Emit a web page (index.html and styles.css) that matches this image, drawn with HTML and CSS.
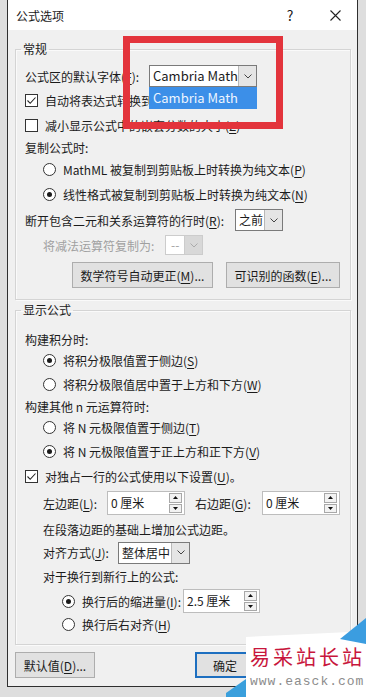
FILE: index.html
```html
<!DOCTYPE html>
<html lang="zh-CN">
<head>
    <meta charset="UTF-8">
    <meta name="viewport" content="width=device-width, initial-scale=1.0">
    <title>公式选项</title>
    <link rel="stylesheet" href="styles.css">
</head>
<body>
    <div class="dialog">
        <div class="titlebar">
            <span class="title">公式选项</span>
            <span class="help">?</span>
            <span class="close">
                <svg width="11" height="11" viewBox="0 0 11 11"><path d="M0.5 0.5L10.5 10.5M10.5 0.5L0.5 10.5" stroke="#222" stroke-width="1.1" fill="none"/></svg>
            </span>
        </div>

        <fieldset class="group group-general">
            <legend>常规</legend>
            <div class="row h22">
                <span class="lbl lbl-font">公式区的默认字体(<u>F</u>):</span>
                <div class="combo combo-font">
                    <span class="combo-text">Cambria Math</span>
                    <span class="combo-arrow"><svg width="8" height="5" viewBox="0 0 8 5"><path d="M0.5 0.5L4 4L7.5 0.5" stroke="#444" fill="none"/></svg></span>
                    <div class="dropdown">Cambria Math</div>
                </div>
            </div>
            <div class="row h26">
                <span class="check"><svg width="11" height="11" viewBox="0 0 11 11"><path d="M1.5 5.5L4.2 8.3L9.5 2.5" stroke="#222" stroke-width="1.1" fill="none"/></svg></span>
                <span>自动将表达式转换到专业格式(<u>A</u>)</span>
            </div>
            <div class="row h24">
                <span class="check"></span>
                <span>减小显示公式中的嵌套分数的大小(<u>Z</u>)</span>
            </div>
            <div class="row h20">复制公式时:</div>
            <div class="row h24 indent">
                <span class="radio"></span>
                <span>MathML 被复制到剪贴板上时转换为纯文本(<u>P</u>)</span>
            </div>
            <div class="row h26 indent">
                <span class="radio on"></span>
                <span>线性格式被复制到剪贴板上时转换为纯文本(<u>N</u>)</span>
            </div>
            <div class="row h26">
                <span class="lbl lbl-break">断开包含二元和关系运算符的行时(<u>R</u>):</span>
                <div class="combo combo-break">
                    <span class="combo-text">之前</span>
                    <span class="combo-arrow"><svg width="8" height="5" viewBox="0 0 8 5"><path d="M0.5 0.5L4 4L7.5 0.5" stroke="#444" fill="none"/></svg></span>
                </div>
            </div>
            <div class="row h24 indent disabled">
                <span class="lbl lbl-minus">将减法运算符复制为:</span>
                <div class="combo combo-minus">
                    <span class="combo-text">--</span>
                    <span class="combo-arrow"><svg width="8" height="5" viewBox="0 0 8 5"><path d="M0.5 0.5L4 4L7.5 0.5" stroke="#aaa" fill="none"/></svg></span>
                </div>
            </div>
            <div class="row button-row">
                <button class="btn btn-autocorrect">数学符号自动更正(<u>M</u>)...</button>
                <button class="btn btn-functions">可识别的函数(<u>E</u>)...</button>
            </div>
        </fieldset>

        <fieldset class="group group-display">
            <legend>显示公式</legend>
            <div class="row h20">构建积分时:</div>
            <div class="row h22 indent">
                <span class="radio on"></span>
                <span>将积分极限值置于侧边(<u>S</u>)</span>
            </div>
            <div class="row h26 indent">
                <span class="radio"></span>
                <span>将积分极限值居中置于上方和下方(<u>W</u>)</span>
            </div>
            <div class="row h18">构建其他 n 元运算符时:</div>
            <div class="row h24 indent">
                <span class="radio"></span>
                <span>将 N 元极限值置于侧边(<u>T</u>)</span>
            </div>
            <div class="row h24 indent">
                <span class="radio on"></span>
                <span>将 N 元极限值置于正上方和正下方(<u>V</u>)</span>
            </div>
            <div class="row h26">
                <span class="check"><svg width="11" height="11" viewBox="0 0 11 11"><path d="M1.5 5.5L4.2 8.3L9.5 2.5" stroke="#222" stroke-width="1.1" fill="none"/></svg></span>
                <span>对独占一行的公式使用以下设置(<u>U</u>)。</span>
            </div>
            <div class="row h28 indent">
                <span class="lbl lbl-left">左边距(<u>L</u>):</span>
                <div class="spin">
                    <span class="spin-text">0 厘米</span>
                    <span class="spin-btns">
                        <span class="spin-btn"><svg width="5" height="3" viewBox="0 0 5 3"><path d="M0 3L2.5 0L5 3Z" fill="#111"/></svg></span>
                        <span class="spin-btn"><svg width="5" height="3" viewBox="0 0 5 3"><path d="M0 0L2.5 3L5 0Z" fill="#111"/></svg></span>
                    </span>
                </div>
                <span class="lbl lbl-right">右边距(<u>G</u>):</span>
                <div class="spin">
                    <span class="spin-text">0 厘米</span>
                    <span class="spin-btns">
                        <span class="spin-btn"><svg width="5" height="3" viewBox="0 0 5 3"><path d="M0 3L2.5 0L5 3Z" fill="#111"/></svg></span>
                        <span class="spin-btn"><svg width="5" height="3" viewBox="0 0 5 3"><path d="M0 0L2.5 3L5 0Z" fill="#111"/></svg></span>
                    </span>
                </div>
            </div>
            <div class="row h24 indent">在段落边距的基础上增加公式边距。</div>
            <div class="row h23 indent">
                <span class="lbl lbl-align">对齐方式(<u>J</u>):</span>
                <div class="combo combo-align">
                    <span class="combo-text">整体居中</span>
                    <span class="combo-arrow"><svg width="8" height="5" viewBox="0 0 8 5"><path d="M0.5 0.5L4 4L7.5 0.5" stroke="#444" fill="none"/></svg></span>
                </div>
            </div>
            <div class="row h25 indent">对于换行到新行上的公式:</div>
            <div class="row h24 indent2">
                <span class="radio on"></span>
                <span class="lbl lbl-wrap">换行后的缩进量(<u>I</u>):</span>
                <div class="spin spin-wrap">
                    <span class="spin-text">2.5 厘米</span>
                    <span class="spin-btns">
                        <span class="spin-btn"><svg width="5" height="3" viewBox="0 0 5 3"><path d="M0 3L2.5 0L5 3Z" fill="#111"/></svg></span>
                        <span class="spin-btn"><svg width="5" height="3" viewBox="0 0 5 3"><path d="M0 0L2.5 3L5 0Z" fill="#111"/></svg></span>
                    </span>
                </div>
            </div>
            <div class="row h23 indent2">
                <span class="radio"></span>
                <span>换行后右对齐(<u>H</u>)</span>
            </div>
        </fieldset>

        <div class="footer">
            <button class="btn btn-default">默认值(<u>D</u>)...</button>
            <button class="btn btn-ok">确定</button>
            <button class="btn btn-cancel">取消</button>
        </div>

        <!-- 截图上的红框标注 -->
        <div class="highlight"></div>
    </div>

    <!-- 水印 -->
    <div class="watermark">
        <svg class="wm-bg" width="140" height="85" viewBox="0 0 140 85">
            <polygon points="20,25 124,20 140,12 140,85 20,85" fill="#fff"/>
            <polygon points="114,27 140,6 140,32" fill="#3b9de0"/>
            <polygon points="0,85 0,81 20,67 20,85" fill="#3a9fdc"/>
        </svg>
        <div class="wm-name">易采站长站</div>
        <div class="wm-url">www.easck.com</div>
    </div>
</body>
</html>
```

FILE: styles.css
```css
* {
    box-sizing: border-box;
}

body {
    margin: 0;
    height: 697px;
    overflow: hidden;
    position: relative;
    background-color: #dedede;
    font-family: "Noto Sans CJK SC", "Noto Sans", sans-serif;
    font-size: 12px;
    color: #1b1b1b;
}

u {
    text-decoration-thickness: 1px;
    text-underline-offset: 2px;
}

.dialog {
    position: relative;
    width: 351px;
    height: 687px;
    margin-left: 7px;
    background-color: #f0f0f0;
    border: 1px solid #2f2f2f;
    border-top: none;
}

.titlebar {
    height: 30px;
    display: flex;
    align-items: center;
    padding-left: 8px;
    background-color: #fff;
}

.title {
    flex: 1;
}

.help {
    width: 46px;
    text-align: center;
    font-size: 14px;
}

.close {
    width: 44px;
    display: flex;
    justify-content: center;
}

.group {
    margin: 11px 6px 0 7px;
    padding: 8px 0 11px;
    border: 1px solid #d4d4d4;
    box-shadow: inset 1px 1px 0 #fafafa, 1px 1px 0 #fafafa;
    min-width: 0;
}

.group-display {
    margin-top: 2px;
    padding: 11px 0 8px;
}

legend {
    margin-left: 5px;
    padding: 0 2px;
    line-height: 16px;
}

.row {
    display: flex;
    align-items: center;
    padding-left: 9px;
    white-space: nowrap;
}

.indent {
    padding-left: 27px;
}

.indent2 {
    padding-left: 46px;
}

.h18 { height: 18px; }
.h20 { height: 20px; }
.h22 { height: 22px; }
.h23 { height: 23px; }
.h24 { height: 24px; }
.h25 { height: 25px; }
.h26 { height: 26px; }
.h28 { height: 28px; }

.disabled {
    color: #a0a0a0;
}

.check {
    width: 13px;
    height: 13px;
    margin-right: 7px;
    border: 1px solid #333;
    background-color: #fff;
    display: flex;
    align-items: center;
    justify-content: center;
    flex-shrink: 0;
}

.radio {
    width: 13px;
    height: 13px;
    margin-right: 7px;
    border: 1px solid #333;
    border-radius: 50%;
    background-color: #fff;
    display: flex;
    align-items: center;
    justify-content: center;
    flex-shrink: 0;
}

.radio.on::after {
    content: "";
    width: 5px;
    height: 5px;
    border-radius: 50%;
    background-color: #1b1b1b;
}

.lbl {
    flex-shrink: 0;
}

.lbl-font { width: 124px; }
.lbl-break { width: 210px; }
.lbl-minus { width: 122px; }
.lbl-left { width: 64px; }
.lbl-right { width: 67px; margin-left: 10px; }
.lbl-align { width: 75px; }
.lbl-wrap { width: 101px; }

.combo {
    position: relative;
    display: flex;
    height: 22px;
    border: 1px solid #7a7a7a;
    background-color: #fff;
}

.combo-text {
    flex: 1;
    padding-left: 3px;
    line-height: 20px;
}

.combo-arrow {
    width: 18px;
    display: flex;
    align-items: center;
    justify-content: center;
    background-color: #e5e5e5;
    border-left: 1px solid #b8b8b8;
}

.combo-font {
    width: 108px;
    font-size: 13px;
}

.combo-break {
    width: 48px;
}

.combo-minus {
    width: 38px;
    height: 20px;
    border-color: #cccccc;
}

.combo-minus .combo-text {
    line-height: 18px;
    padding-left: 5px;
}

.combo-minus .combo-arrow {
    background-color: #d8d8d8;
    border-left-color: #cccccc;
}

.combo-align {
    width: 72px;
}

.dropdown {
    position: absolute;
    left: -1px;
    top: 21px;
    width: 108px;
    height: 22px;
    padding-left: 4px;
    line-height: 22px;
    background-color: #3c8fe8;
    color: #eef5ff;
}

.spin {
    display: flex;
    width: 78px;
    height: 24px;
    border: 1px solid #bdbdbd;
    background-color: #fff;
}

.spin-text {
    flex: 1;
    padding-left: 3px;
    line-height: 22px;
}

.spin-btns {
    width: 15px;
    padding: 1px 2px 1px 0;
    display: flex;
    flex-direction: column;
    gap: 1px;
}

.spin-btn {
    flex: 1;
    border: 1px solid #a8a8a8;
    background-color: #f2f2f2;
    display: flex;
    align-items: center;
    justify-content: center;
}

.spin-wrap {
    width: 77px;
}

.btn {
    height: 26px;
    padding: 0;
    border: 1px solid #adadad;
    background-color: #e1e1e1;
    font-family: inherit;
    font-size: 12px;
    color: #1b1b1b;
}

.button-row {
    margin-top: 5px;
    padding-left: 56px;
    gap: 13px;
}

.btn-autocorrect { width: 141px; }
.btn-functions { width: 114px; }

.footer {
    display: flex;
    margin-top: 7px;
    padding: 0 6px 0 7px;
    gap: 10px;
}

.btn-default { width: 80px; }

.btn-ok {
    width: 60px;
    margin-left: 90px;
    border: 2px solid #1d6fc0;
}

.btn-cancel { width: 70px; }

.highlight {
    position: absolute;
    left: 115px;
    top: 36px;
    width: 160px;
    height: 93px;
    border: 7px solid #e3343c;
}

.watermark {
    position: absolute;
    left: 226px;
    top: 612px;
    width: 140px;
    height: 85px;
    padding: 34px 0 0 24px;
}

.wm-bg {
    position: absolute;
    left: 0;
    top: 0;
}

.wm-name {
    position: relative;
    height: 22px;
    line-height: 22px;
    font-size: 20px;
    letter-spacing: 3px;
    color: #c8163c;
    white-space: nowrap;
}

.wm-url {
    position: relative;
    margin-top: 7px;
    line-height: 14px;
    font-family: "Liberation Mono", monospace;
    font-size: 13px;
    letter-spacing: 1px;
    color: #8c8c8c;
    white-space: nowrap;
}
```
